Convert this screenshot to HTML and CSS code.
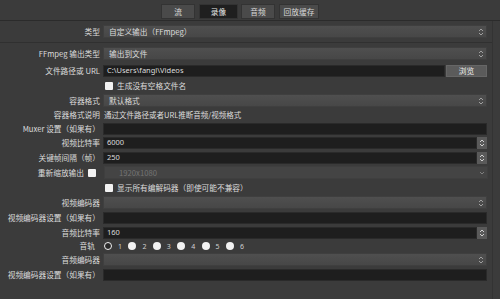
FILE: index.html
```html
<!DOCTYPE html>
<html lang="zh-CN">
<head>
    <meta charset="UTF-8">
    <meta name="viewport" content="width=device-width, initial-scale=1.0">
    <title>输出设置 - 录像</title>
    <link rel="stylesheet" href="styles.css">
</head>
<body>

    <!-- 标签栏 -->
    <div class="tabs">
        <div class="tab t-stream">流</div>
        <div class="tab t-rec active">录像</div>
        <div class="tab t-audio">音频</div>
        <div class="tab t-replay">回放缓存</div>
    </div>

    <div class="pane">
        <div class="row">
            <div class="lbl">类型</div>
            <div class="combo">自定义输出（FFmpeg）<span class="arrows"><svg width="6" height="8" viewBox="0 0 6 8"><path d="M1 3 L3 1 L5 3 M1 5 L3 7 L5 5" fill="none" stroke="#a0a0a0" stroke-width="1"/></svg></span></div>
        </div>

        <div class="sep"></div>

        <div class="row">
            <div class="lbl">FFmpeg 输出类型</div>
            <div class="combo">输出到文件<span class="arrows"><svg width="6" height="8" viewBox="0 0 6 8"><path d="M1 3 L3 1 L5 3 M1 5 L3 7 L5 5" fill="none" stroke="#a0a0a0" stroke-width="1"/></svg></span></div>
        </div>

        <div class="row gap-top">
            <div class="lbl">文件路径或 URL</div>
            <div class="input path">C:\Users\fangl\Videos</div>
            <div class="btn">浏览</div>
        </div>

        <div class="row check-row">
            <span class="check"></span>
            <span>生成没有空格文件名</span>
        </div>

        <div class="row">
            <div class="lbl">容器格式</div>
            <div class="combo">默认格式<span class="arrows"><svg width="6" height="8" viewBox="0 0 6 8"><path d="M1 3 L3 1 L5 3 M1 5 L3 7 L5 5" fill="none" stroke="#a0a0a0" stroke-width="1"/></svg></span></div>
        </div>

        <div class="row short">
            <div class="lbl">容器格式说明</div>
            <div class="note">通过文件路径或者URL推断音频/视频格式</div>
        </div>

        <div class="row">
            <div class="lbl">Muxer 设置（如果有）</div>
            <div class="input full"></div>
        </div>

        <div class="row h14">
            <div class="lbl">视频比特率</div>
            <div class="input spin">6000</div>
            <div class="spin-btn"><svg width="6" height="8" viewBox="0 0 6 8"><path d="M1 3 L3 1 L5 3 M1 5 L3 7 L5 5" fill="none" stroke="#cfcfcf" stroke-width="1"/></svg></div>
        </div>

        <div class="row">
            <div class="lbl">关键帧间隔（帧）</div>
            <div class="input spin">250</div>
            <div class="spin-btn"><svg width="6" height="8" viewBox="0 0 6 8"><path d="M1 3 L3 1 L5 3 M1 5 L3 7 L5 5" fill="none" stroke="#cfcfcf" stroke-width="1"/></svg></div>
        </div>

        <div class="row">
            <div class="lbl with-check">重新缩放输出<span class="check"></span></div>
            <div class="combo disabled">1920x1080<span class="arrows"><svg width="6" height="4" viewBox="0 0 6 4"><path d="M1 1 L3 3 L5 1" fill="none" stroke="#808080" stroke-width="1"/></svg></span></div>
        </div>

        <div class="row check-row">
            <span class="check"></span>
            <span>显示所有编解码器（即使可能不兼容）</span>
        </div>

        <div class="row">
            <div class="lbl">视频编码器</div>
            <div class="combo"><span class="arrows"><svg width="6" height="8" viewBox="0 0 6 8"><path d="M1 3 L3 1 L5 3 M1 5 L3 7 L5 5" fill="none" stroke="#a0a0a0" stroke-width="1"/></svg></span></div>
        </div>

        <div class="row">
            <div class="lbl">视频编码器设置（如果有）</div>
            <div class="input full"></div>
        </div>

        <div class="row">
            <div class="lbl">音频比特率</div>
            <div class="input spin">160</div>
            <div class="spin-btn"><svg width="6" height="8" viewBox="0 0 6 8"><path d="M1 3 L3 1 L5 3 M1 5 L3 7 L5 5" fill="none" stroke="#cfcfcf" stroke-width="1"/></svg></div>
        </div>

        <div class="row h12">
            <div class="lbl track-lbl">音轨</div>
            <div class="radios">
                <span class="radio-item"><span class="radio on"></span>1</span>
                <span class="radio-item"><span class="radio"></span>2</span>
                <span class="radio-item"><span class="radio"></span>3</span>
                <span class="radio-item"><span class="radio"></span>4</span>
                <span class="radio-item"><span class="radio"></span>5</span>
                <span class="radio-item"><span class="radio"></span>6</span>
            </div>
        </div>

        <div class="row">
            <div class="lbl">音频编码器</div>
            <div class="combo"><span class="arrows"><svg width="6" height="8" viewBox="0 0 6 8"><path d="M1 3 L3 1 L5 3 M1 5 L3 7 L5 5" fill="none" stroke="#a0a0a0" stroke-width="1"/></svg></span></div>
        </div>

        <div class="row">
            <div class="lbl">视频编码器设置（如果有）</div>
            <div class="input full"></div>
        </div>
    </div>

</body>
</html>
```

FILE: styles.css
```css
body {
    margin: 0;
    width: 500px;
    height: 299px;
    overflow: hidden;
    background-color: #3b3b3b;
    color: #dcdcdc;
    font-family: "Noto Sans CJK SC", "Noto Sans", sans-serif;
    font-size: 7.7px;
    line-height: 1;
}

/* Barra de pestañas */
.tabs {
    display: flex;
    height: 16px;
    padding-top: 4px;
    padding-left: 161px;
    border-bottom: 1px solid #2b2b2b;
    box-sizing: content-box;
}
.tab {
    height: 15px;
    display: flex;
    align-items: center;
    justify-content: center;
    background-color: #4a4a4a;
    border: 1px solid #333;
    box-sizing: border-box;
    color: #d8d8d8;
    margin-right: 3px;
}
.tab.active {
    background-color: #1f1f1f;
    color: #e6e6e6;
}
.t-stream { width: 34px; margin-right: 4px; }
.t-rec { width: 39px; }
.t-audio { width: 34px; margin-right: 4px; }
.t-replay { width: 40px; }

/* Formulario */
.pane {
    padding-top: 3px;
    width: 493px;
    height: 278px;
    border-right: 1px solid #333;
    box-sizing: border-box;
}
.row {
    display: flex;
    align-items: center;
    height: 15px;
}
.row.h14 { height: 14px; }
.row.h12 { height: 12px; }
.row.short { height: 13px; }
.row.gap-top { margin-top: 2px; }

.lbl {
    width: 100px;
    padding-right: 3px;
    text-align: right;
    white-space: nowrap;
    flex: none;
}
.lbl.with-check {
    display: flex;
    align-items: center;
    justify-content: flex-end;
    padding-right: 4px;
    width: 100px;
}
.lbl.with-check .check {
    margin-left: 4px;
}
.track-lbl {
    width: 95px;
    padding-right: 8px;
}

.sep {
    height: 1px;
    background-color: #303030;
    margin: 3px 0;
}

.combo {
    position: relative;
    width: 384px;
    height: 13px;
    box-sizing: border-box;
    background: linear-gradient(#4f4f4f, #474747);
    border: 1px solid #3f3f3f;
    padding-left: 5px;
    display: flex;
    align-items: center;
}
.combo.disabled {
    background: #444;
    color: #747474;
    padding-left: 14px;
}
.arrows {
    position: absolute;
    right: 0;
    top: 0;
    width: 10px;
    height: 11px;
    display: flex;
    align-items: center;
    justify-content: center;
}

.input {
    height: 12px;
    box-sizing: border-box;
    background-color: #1e1e1e;
    border: 1px solid #2a2a2a;
    padding-left: 3px;
    display: flex;
    align-items: center;
    font-family: "Noto Sans", "Noto Sans CJK SC", sans-serif;
    font-size: 7.5px;
}
.input.full { width: 384px; }
.input.path { width: 342px; }
.input.spin { width: 374px; }

.spin-btn {
    width: 10px;
    height: 12px;
    background-color: #5a5a5a;
    display: flex;
    align-items: center;
    justify-content: center;
}

.btn {
    width: 41px;
    height: 12px;
    margin-left: 1px;
    background-color: #5b5b5b;
    border: 1px solid #666;
    box-sizing: border-box;
    display: flex;
    align-items: center;
    justify-content: center;
    color: #eee;
}

.note {
    padding-left: 1px;
    font-size: 7.5px;
}

.check-row {
    padding-left: 105px;
}
.check {
    display: inline-block;
    width: 8px;
    height: 8px;
    background-color: #f2f2f2;
    border-radius: 1px;
    margin-right: 4px;
    flex: none;
}

.radios {
    display: flex;
    align-items: center;
    padding-left: 1px;
}
.radio-item {
    display: flex;
    align-items: center;
    width: 24.4px;
    font-family: "Noto Sans", sans-serif;
    font-size: 7px;
    color: #d0d0d0;
}
.radio {
    width: 8px;
    height: 8px;
    border-radius: 50%;
    background-color: #f2f2f2;
    margin-right: 6px;
    box-sizing: border-box;
}
.radio.on {
    background-color: #2a2a2a;
    border: 1.5px solid #f2f2f2;
}
```
